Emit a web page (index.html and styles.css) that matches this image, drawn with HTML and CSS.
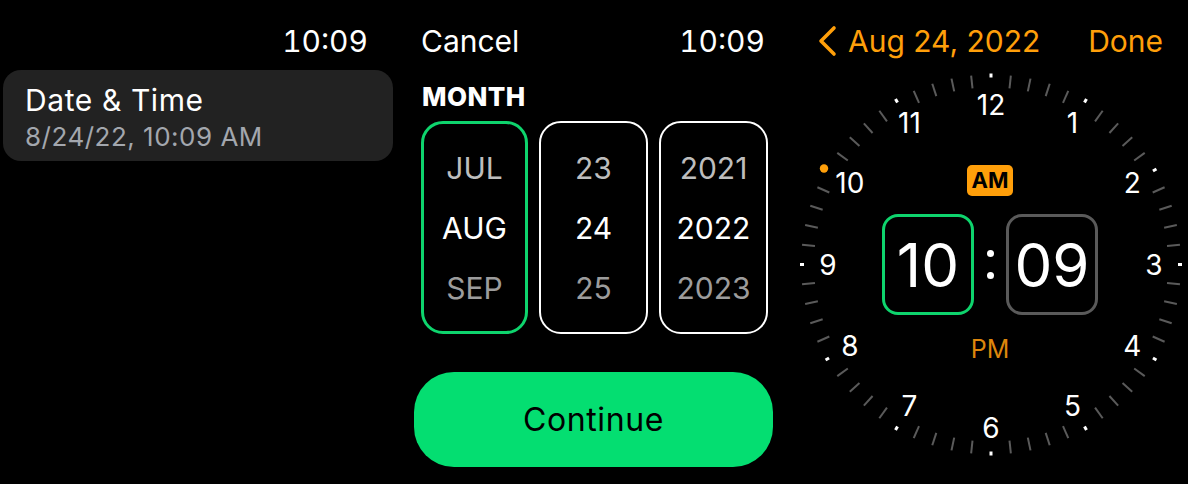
FILE: index.html
```html
<!DOCTYPE html>
<html lang="en">
<head>
<meta charset="utf-8">
<title>Date &amp; Time</title>
<link rel="stylesheet" href="styles.css">
</head>
<body>
<div class="screens">
  <section class="panel panel-list">
    <div class="status status-right"><span class="clock-time">10:09</span></div>
    <div class="card">
      <div class="card-title">Date &amp; Time</div>
      <div class="card-sub">8/24/22, 10:09 AM</div>
    </div>
  </section>

  <section class="panel panel-date">
    <div class="status status-split">
      <span class="cancel">Cancel</span>
      <span class="clock-time">10:09</span>
    </div>
    <div class="field-label">MONTH</div>
    <div class="pickers">
      <div class="picker picker-active">
        <span class="pv pv-prev">JUL</span>
        <span class="pv pv-cur">AUG</span>
        <span class="pv pv-next">SEP</span>
      </div>
      <div class="picker">
        <span class="pv pv-prev">23</span>
        <span class="pv pv-cur">24</span>
        <span class="pv pv-next">25</span>
      </div>
      <div class="picker">
        <span class="pv pv-prev">2021</span>
        <span class="pv pv-cur">2022</span>
        <span class="pv pv-next">2023</span>
      </div>
    </div>
    <button class="continue">Continue</button>
  </section>

  <section class="panel panel-time">
    <div class="status status-split orange">
      <span class="back">
        <svg class="chev" width="22" height="32" viewBox="0 0 22 32"><path d="M18 3 L5 16 L18 29" fill="none" stroke="#ff9f0a" stroke-width="3.6" stroke-linecap="round" stroke-linejoin="round"/></svg>
        <span>Aug 24, 2022</span>
      </span>
      <span class="done">Done</span>
    </div>
    <div class="dial">
      <svg class="dial-svg" width="396" height="414" viewBox="-199 -194.5 396 414">
        <g class="minor" stroke="#5a5a5a" stroke-width="2">
          <line y1="-190" y2="-177" transform="rotate(6)"/>
          <line y1="-190" y2="-177" transform="rotate(12)"/>
          <line y1="-190" y2="-177" transform="rotate(18)"/>
          <line y1="-190" y2="-177" transform="rotate(24)"/>
          <line y1="-190" y2="-177" transform="rotate(36)"/>
          <line y1="-190" y2="-177" transform="rotate(42)"/>
          <line y1="-190" y2="-177" transform="rotate(48)"/>
          <line y1="-190" y2="-177" transform="rotate(54)"/>
          <line y1="-190" y2="-177" transform="rotate(66)"/>
          <line y1="-190" y2="-177" transform="rotate(72)"/>
          <line y1="-190" y2="-177" transform="rotate(78)"/>
          <line y1="-190" y2="-177" transform="rotate(84)"/>
          <line y1="-190" y2="-177" transform="rotate(96)"/>
          <line y1="-190" y2="-177" transform="rotate(102)"/>
          <line y1="-190" y2="-177" transform="rotate(108)"/>
          <line y1="-190" y2="-177" transform="rotate(114)"/>
          <line y1="-190" y2="-177" transform="rotate(126)"/>
          <line y1="-190" y2="-177" transform="rotate(132)"/>
          <line y1="-190" y2="-177" transform="rotate(138)"/>
          <line y1="-190" y2="-177" transform="rotate(144)"/>
          <line y1="-190" y2="-177" transform="rotate(156)"/>
          <line y1="-190" y2="-177" transform="rotate(162)"/>
          <line y1="-190" y2="-177" transform="rotate(168)"/>
          <line y1="-190" y2="-177" transform="rotate(174)"/>
          <line y1="-190" y2="-177" transform="rotate(186)"/>
          <line y1="-190" y2="-177" transform="rotate(192)"/>
          <line y1="-190" y2="-177" transform="rotate(198)"/>
          <line y1="-190" y2="-177" transform="rotate(204)"/>
          <line y1="-190" y2="-177" transform="rotate(216)"/>
          <line y1="-190" y2="-177" transform="rotate(222)"/>
          <line y1="-190" y2="-177" transform="rotate(228)"/>
          <line y1="-190" y2="-177" transform="rotate(234)"/>
          <line y1="-190" y2="-177" transform="rotate(246)"/>
          <line y1="-190" y2="-177" transform="rotate(252)"/>
          <line y1="-190" y2="-177" transform="rotate(258)"/>
          <line y1="-190" y2="-177" transform="rotate(264)"/>
          <line y1="-190" y2="-177" transform="rotate(276)"/>
          <line y1="-190" y2="-177" transform="rotate(282)"/>
          <line y1="-190" y2="-177" transform="rotate(288)"/>
          <line y1="-190" y2="-177" transform="rotate(294)"/>
          <line y1="-190" y2="-177" transform="rotate(306)"/>
          <line y1="-190" y2="-177" transform="rotate(312)"/>
          <line y1="-190" y2="-177" transform="rotate(318)"/>
          <line y1="-190" y2="-177" transform="rotate(324)"/>
          <line y1="-190" y2="-177" transform="rotate(336)"/>
          <line y1="-190" y2="-177" transform="rotate(342)"/>
          <line y1="-190" y2="-177" transform="rotate(348)"/>
          <line y1="-190" y2="-177" transform="rotate(354)"/>
        </g>
        <g class="major" stroke="#ffffff" stroke-width="3">
          <line y1="-191" y2="-187" transform="rotate(0)"/>
          <line y1="-191" y2="-187" transform="rotate(30)"/>
          <line y1="-191" y2="-187" transform="rotate(60)"/>
          <line y1="-191" y2="-187" transform="rotate(90)"/>
          <line y1="-191" y2="-187" transform="rotate(120)"/>
          <line y1="-191" y2="-187" transform="rotate(150)"/>
          <line y1="-191" y2="-187" transform="rotate(180)"/>
          <line y1="-191" y2="-187" transform="rotate(210)"/>
          <line y1="-191" y2="-187" transform="rotate(240)"/>
          <line y1="-191" y2="-187" transform="rotate(270)"/>
          <line y1="-191" y2="-187" transform="rotate(330)"/>
        </g>
        <circle cx="-167" cy="-96" r="4.2" fill="#ff9f0a"/>
        <g class="nums" fill="#ffffff">
          <text x="81.5" y="-141.2" dy="0.36em">1</text>
          <text x="141.2" y="-81.5" dy="0.36em">2</text>
          <text x="163" y="0" dy="0.36em">3</text>
          <text x="141.2" y="81.5" dy="0.36em">4</text>
          <text x="81.5" y="141.2" dy="0.36em">5</text>
          <text x="0" y="163" dy="0.36em">6</text>
          <text x="-81.5" y="141.2" dy="0.36em">7</text>
          <text x="-141.2" y="81.5" dy="0.36em">8</text>
          <text x="-163" y="0" dy="0.36em">9</text>
          <text x="-141.2" y="-81.5" dy="0.36em">10</text>
          <text x="-81.5" y="-141.2" dy="0.36em">11</text>
          <text x="0" y="-160" dy="0.36em">12</text>
        </g>
      </svg>
      <div class="dial-center">
        <span class="ampm am">AM</span>
        <div class="hm">
          <span class="hm-box hm-active">10</span>
          <span class="colon"><i></i><i></i></span>
          <span class="hm-box">09</span>
        </div>
        <span class="ampm pm">PM</span>
      </div>
    </div>
  </section>
</div>
</body>
</html>
```

FILE: styles.css
```css
* { box-sizing: border-box; }

html, body {
  margin: 0;
  padding: 0;
  background: #000;
}

body {
  width: 1188px;
  height: 484px;
  overflow: hidden;
  font-family: "Inter", "Noto Sans", sans-serif;
  color: #fff;
}

.screens {
  display: flex;
  width: 1188px;
  height: 484px;
}

.panel {
  width: 396px;
  height: 484px;
  display: flex;
  flex-direction: column;
  position: relative;
}

.status {
  height: 70px;
  padding-top: 22px;
  font-size: 30px;
  line-height: 38px;
  display: flex;
  align-items: flex-start;
}

.clock-time {
  font-size: 30px;
  font-variant-numeric: tabular-nums;
}

.status-right {
  justify-content: flex-end;
  padding-right: 28px;
}

.status-split {
  justify-content: space-between;
}

/* list panel */
.card {
  margin: 0 3px;
  height: 91px;
  border-radius: 18px;
  background: #222222;
  padding: 12px 22px 0;
}

.card-title {
  font-size: 30px;
  line-height: 37px;
  letter-spacing: 0.6px;
}

.card-sub {
  font-size: 26px;
  line-height: 34px;
  margin-top: 1px;
  color: #a3a7ae;
  letter-spacing: 0.5px;
}

/* date panel */
.panel-date .status {
  padding-left: 25px;
  padding-right: 27px;
}

.field-label {
  margin-left: 26px;
  height: 51px;
  font-size: 26px;
  font-weight: 800;
  line-height: 28px;
  padding-top: 13px;
  letter-spacing: 0.4px;
}

.pickers {
  margin-left: 25px;
  width: 347px;
  height: 213px;
  display: grid;
  grid-template-columns: 107px 109px 109px;
  column-gap: 11px;
}

.picker {
  border: 2.5px solid #ffffff;
  border-radius: 22px;
  display: flex;
  flex-direction: column;
  align-items: center;
  justify-content: center;
  gap: 22px;
}

.picker-active {
  border: 3.5px solid #0ed46d;
}

.pv {
  font-size: 30px;
  line-height: 38px;
}

.pv-prev { color: #bdbdbd; }
.pv-cur { color: #ffffff; }
.pv-next { color: #9c9c9c; }

.continue {
  margin: 38px 0 0 18px;
  width: 359px;
  height: 95px;
  border: none;
  border-radius: 40px;
  background: #04de71;
  color: #000;
  font-family: "Inter", "Noto Sans", sans-serif;
  font-size: 32px;
  letter-spacing: 0.6px;
  padding: 0;
}

/* time panel */
.orange { color: #ff9f0a; }

.panel-time .status {
  padding-left: 24px;
  padding-right: 25px;
}

.back {
  display: flex;
  align-items: center;
  gap: 10px;
}

.chev {
  display: block;
}

.dial {
  position: relative;
  width: 396px;
  height: 414px;
}

.dial-svg {
  display: block;
  overflow: visible;
}

.nums text {
  font-family: "Inter", "Noto Sans", sans-serif;
  font-size: 28px;
  text-anchor: middle;
}

.dial-center {
  position: absolute;
  top: 95px;
  left: 0;
  right: 0;
  display: flex;
  flex-direction: column;
  align-items: center;
}

.ampm {
  font-size: 25px;
  line-height: 31px;
}

.am {
  background: #ff9f0a;
  color: #000;
  font-weight: 700;
  font-size: 22px;
  border-radius: 5px;
  padding: 0 5px;
  height: 31px;
}

.pm {
  color: #dd860c;
  margin-top: 19px;
}

.hm {
  margin-top: 18px;
  display: flex;
  align-items: center;
}

.hm-box {
  width: 92px;
  height: 101px;
  border-radius: 16px;
  border: 3px solid #5a5a5a;
  display: flex;
  align-items: center;
  justify-content: center;
  font-size: 60px;
}

.hm-active {
  border-color: #0ed46d;
}

.colon {
  width: 32px;
  display: flex;
  flex-direction: column;
  align-items: center;
  gap: 15px;
}

.colon i {
  width: 7px;
  height: 7px;
  border-radius: 50%;
  background: #fff;
}
```
